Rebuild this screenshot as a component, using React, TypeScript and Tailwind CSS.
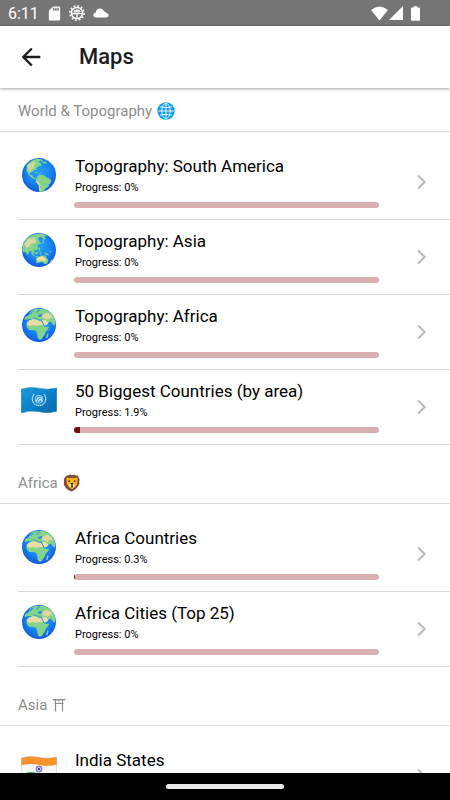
import type { ReactNode } from 'react';
import { MdArrowBack, MdSdCard } from 'react-icons/md';

type IconName = 'americas' | 'asia' | 'africa' | 'un' | 'india';

interface MapItem {
  title: string;
  progress: number;
  icon: IconName;
}

interface Section {
  title: string;
  emoji: ReactNode;
  items: MapItem[];
}

/* ---------- Section emojis ---------- */

function MeridianGlobe() {
  return (
    <svg viewBox="0 0 18 18" className="size-[18px]" fill="none" aria-hidden>
      <circle cx="9" cy="9" r="8.7" fill="#0f9bee" />
      <g stroke="#e6f5fe" strokeWidth="1">
        <ellipse cx="9" cy="9" rx="4.2" ry="7.6" />
        <path d="M9 1.200v15.600M1.200 9h15.600M3 4.900q6 1.600 12 0M3 13.100q6-1.600 12 0" />
      </g>
    </svg>
  );
}

function Lion() {
  return (
    <svg viewBox="0 0 18 18" className="size-[18px]" aria-hidden>
      <path
        d="M3.500 1.500 5.300 1.600 7 .6l2 .6 2-.6 1.800 1 2 0 1 2.100.9 2-.5 1.800.2 2.200-1.200 2.200-1.400 2-2 1.900-2 .9L9 17.600l-2.100-.9-2-.9-2-1.900-1.400-2L.8 9.700l.2-2.200L.7 5.700l1-2Z"
        fill="#7b4a3c"
      />
      <path
        d="M3.300 4.300Q4.700 3 5.800 4.200 9 3.200 12.200 4.200q1.200-1.200 2.500.1l-.3 3.300-.5 3.200-2.200 2.800L9 15.200l-2.700-1.600-2.200-2.800-.5-3.200Z"
        fill="#fcb316"
      />
      <path d="M7.500 9h3l1.500 2.600-1.600 2L9 14.400l-1.400-.8-1.600-2Z" fill="#fbe3a3" />
      <path d="M7.400 9h3.200L9.500 11l.7 2.400H7.800L8.500 11Z" fill="#38271f" />
      <circle cx="6.200" cy="7.200" r=".85" fill="#38271f" />
      <circle cx="11.800" cy="7.200" r=".85" fill="#38271f" />
    </svg>
  );
}

function Torii() {
  return (
    <svg viewBox="0 0 14 14" className="size-3.5" fill="none" stroke="#8e8e8e" aria-hidden>
      <path d="M.5 1.500h13M2.500 5.500h9" />
      <path d="M1 2.500h12" strokeOpacity=".4" />
      <path d="M3.500 2v11.500M10.500 2v11.500" strokeWidth="1.200" />
      <path d="M7 2v3.500" strokeOpacity=".7" />
    </svg>
  );
}

/* ---------- Row icons ---------- */

function Globe({ id, children }: { id: string; children: ReactNode }) {
  return (
    <svg viewBox="0 0 102 102" className="size-[34px]" aria-hidden>
      <defs>
        <radialGradient id={`${id}-sea`} cx=".5" cy=".42" r=".6">
          <stop offset="0" stopColor="#25a0f8" />
          <stop offset=".55" stopColor="#1688f3" />
          <stop offset="1" stopColor="#1356df" />
        </radialGradient>
        <clipPath id={`${id}-clip`}>
          <circle cx="51" cy="51" r="51" />
        </clipPath>
      </defs>
      <g clipPath={`url(#${id}-clip)`}>
        <rect width="102" height="102" fill={`url(#${id}-sea)`} />
        {children}
      </g>
    </svg>
  );
}

function AmericasGlobe({ id }: { id: string }) {
  return (
    <Globe id={id}>
      <path
        d="M15 21Q25 8 43 2l14 1-2 6-7 2 8 4 4 8-9 1-7 5-1 6-7 2-5 5-6 1-1 7 7 2 5 7 7 2-4 3-10-5-9-9-7-12Z"
        fill="#83d488"
      />
      <path d="M17 22 34 10l8 3-6 9 1 8-8 5-3 8-7-9-3-7Z" fill="#c9d99a" />
      <path d="m54 3 8 3-2 6 8-2 7 4-5 3-7-2-6-5Z" fill="#83d488" />
      <path d="m65 2 13 2 12 12-6 0-5-7-8-2Z" fill="#9adfb0" />
      <path d="m34 43 9-1 6 4 8 1-2 2-10-3Z" fill="#83d488" />
      <path
        d="m46 54 8-4 12 2 6 6 8 3 8 6-2 8-5 4-2 8-8 4-5 7-6 5-6 1-3-4 1-10-2-10-8-9 1-8Z"
        fill="#83d488"
      />
      <path d="m43 66 6 6 6 7-1 10 3 10-5-2-1-15-8-9Z" fill="#ead7a2" />
    </Globe>
  );
}

function AsiaGlobe({ id }: { id: string }) {
  return (
    <Globe id={id}>
      <path
        d="M2 38Q10 14 34 5L58 1l18 7-9 2 5 9-8 0-7-8-9 4 4 9 6 8-8 1-4 5 4 8-6 5-8 1 2 8-5 3-5-8-5 0-7 12-6-10-9-1Z"
        fill="#83d488"
      />
      <path d="m6 34 13-17 15-3 10 7-4 8-11 3-6 8-9 4Z" fill="#dfd7a2" />
      <path d="m62 17 5 8-5 7-4 1 4-7Z" fill="#83d488" />
      <path
        d="m51 42 4 6-1 7 5 5-5-1-4-9ZM26 55l9 8 4 6 11 1-2 3-12-3-9-9ZM40 58l8-3-1 9-7 1ZM52 60l6 1-3 6ZM65 59l11 2 6 6-10-1Z"
        fill="#78cf91"
      />
      <path
        d="m42 75 8-3 5-4 8-1 3 4 3-5 5 9 5 7-4 10-7 1-8-7-8 3-9 1Z"
        fill="#83d488"
      />
      <path d="m44 75 10-3 7-3 6 5 5 5-2 7-10-4-12 4Z" fill="#f0dda6" />
      <path d="m87 81 4 2-5 8-3 0ZM83 55l5 1-4 3Z" fill="#8fdc9b" />
    </Globe>
  );
}

function AfricaGlobe({ id }: { id: string }) {
  return (
    <Globe id={id}>
      <path
        d="M20 15 30 6 44 2l8 2 10-3 22 10 12 14 5 20-4 9-5-5-5-8-6 2-6 6-9 6-5-1-7-9-9-7-8-2-7-3-10 0-12 3 1-9 9-3 4-5 3-3-3-4Z"
        fill="#83d488"
      />
      <path d="m30 8 5 2-6 5-1 4-4-2 2-5ZM48 5l6 1-5 4-3 5-3-3Z" fill="#2a95ee" />
      <path d="m48 21 8-3 9 2 1 4-8 1-4 2-5-1Z" fill="#288eec" />
      <path d="m60 20 16-6 12 7 5 12-8-4-7 7-9-4-8-2Z" fill="#dfd89e" />
      <path
        d="m14 44 8-8 12-4 9 1 6 4 10 1 6 11 7 8 9-1-3 8-8 8-1 7-6 7-3 7-7 2-6-6-1-11-4-10-9-2-11 0-8-9Z"
        fill="#83d488"
      />
      <path d="m16 43 8-6 12-4 8 2 8 4 6 1 6 12-11-1-10 2-11-1-9 1-8-3Z" fill="#e9dca4" />
      <path d="m61 37 10-1 8 8-3 6-8 3-5-8Z" fill="#eee0a8" />
      <path d="m58 38 5 8 4 9 8-3 5-6" fill="none" stroke="#188bec" strokeWidth="2.500" />
      <path d="m33 29 7 3 5 0 5 4 10 0" fill="none" stroke="#188bec" strokeWidth="2.500" />
      <path d="m76 77 4 1-4 12-4 0Z" fill="#8fdc9b" />
    </Globe>
  );
}

const FLAG_OUTLINE = 'M.3 3.200Q8 .2 17.500 2.200T35.700 2v23.200q-8 2.600-17.500.6T.3 27Z';

function UnFlag() {
  return (
    <svg viewBox="0 0 36 28" className="h-7 w-9" fill="none" aria-hidden>
      <defs>
        <linearGradient id="un-blue" x1="0" y1="0" x2="1" y2="1">
          <stop offset="0" stopColor="#1e9bdf" />
          <stop offset=".55" stopColor="#087fc9" />
          <stop offset="1" stopColor="#0866a9" />
        </linearGradient>
      </defs>
      <path d={FLAG_OUTLINE} fill="url(#un-blue)" stroke="#1673ab" strokeWidth=".5" />
      <g stroke="#cfeaf8">
        <circle cx="18" cy="13.200" r="3.900" strokeWidth=".8" />
        <path
          d="m15.500 15.500 1-3 2-1.500M17.500 15.800l1-2.300 2 .3.500 2M19 11.200l1.800 1.300"
          strokeWidth="1.300"
        />
        <path
          d="M13 8.200q-3.500 5 .2 9.500 2 2 4.800 1.600 2.800.4 4.800-1.600 3.700-4.500.2-9.500"
          strokeWidth="1.200"
          strokeDasharray="1.600 .4"
        />
      </g>
    </svg>
  );
}

function IndiaFlag() {
  return (
    <svg viewBox="0 0 36 28" className="h-7 w-9" fill="none" aria-hidden>
      <defs>
        <clipPath id="india-clip">
          <path d={FLAG_OUTLINE} />
        </clipPath>
      </defs>
      <g clipPath="url(#india-clip)">
        <rect width="36" height="28" fill="#f7f7f7" />
        <path d="M0 0h36v9.500q-9 2.400-18 .4T0 10.500Z" fill="#f8922a" />
        <path d="M0 19q9-3 18-.8t18-.4V28H0Z" fill="#138a2e" />
      </g>
      <g stroke="#4a4bb0">
        <circle cx="18" cy="14" r="3" strokeWidth=".8" />
        <path
          d="M15 14h6M18 11v6M15.900 11.900l4.200 4.200M20.100 11.900l-4.200 4.200"
          strokeWidth=".5"
        />
      </g>
      <circle cx="18" cy="14" r="1.100" fill="#3436a5" />
      <path d={FLAG_OUTLINE} stroke="#8a8a8a" strokeOpacity=".4" strokeWidth=".6" />
    </svg>
  );
}

function RowIcon({ name, id }: { name: IconName; id: string }) {
  switch (name) {
    case 'americas':
      return <AmericasGlobe id={id} />;
    case 'asia':
      return <AsiaGlobe id={id} />;
    case 'africa':
      return <AfricaGlobe id={id} />;
    case 'un':
      return <UnFlag />;
    case 'india':
      return <IndiaFlag />;
  }
}

/* ---------- Data ---------- */

const SECTIONS: Section[] = [
  {
    title: 'World & Topography',
    emoji: <MeridianGlobe />,
    items: [
      { title: 'Topography: South America', progress: 0, icon: 'americas' },
      { title: 'Topography: Asia', progress: 0, icon: 'asia' },
      { title: 'Topography: Africa', progress: 0, icon: 'africa' },
      { title: '50 Biggest Countries (by area)', progress: 1.9, icon: 'un' },
    ],
  },
  {
    title: 'Africa',
    emoji: <Lion />,
    items: [
      { title: 'Africa Countries', progress: 0.3, icon: 'africa' },
      { title: 'Africa Cities (Top 25)', progress: 0, icon: 'africa' },
    ],
  },
  {
    title: 'Asia',
    emoji: <Torii />,
    items: [{ title: 'India States', progress: 0, icon: 'india' }],
  },
];

/* ---------- Layout ---------- */

function StatusBar() {
  return (
    <div className="flex h-[26px] shrink-0 items-center bg-[#757575] pl-2 pr-[30px] text-white">
      <span className="w-[38px] pt-0.5 text-base leading-6">6:11</span>
      <MdSdCard className="size-[17px] shrink-0" aria-hidden />
      {/* debug cog */}
      <svg viewBox="0 0 16 16" className="ml-1.5 size-4" fill="none" aria-hidden>
        <circle cx="8" cy="8" r="5.600" stroke="white" strokeWidth="1.500" />
        <circle cx="8" cy="8" r="7.100" stroke="white" strokeWidth="1.500" strokeDasharray="1.860 1.860" />
        <path d="M3 8.600h10M8 8.600v5" stroke="white" strokeWidth="1.300" />
        <path d="M4.500 7.500a3.500 3 0 0 1 7 0Z" fill="white" />
        <path d="M6.300 6.300h.8M8.900 6.300h.8" stroke="#757575" strokeWidth=".8" />
      </svg>
      <svg viewBox="0 0 16 10" className="ml-2 h-2.5 w-4" fill="white" aria-hidden>
        <path d="M3 9.500Q.3 9.300.3 7 .4 4.800 2.800 4.600 3.400.6 7 .5q2.800 0 4 3 1.500-.2 2.300 1.400 2.400.3 2.400 2.300-.1 2.100-2.400 2.300Z" />
      </svg>
      <span className="grow" />
      <svg viewBox="0 0 17 15" className="h-[15px] w-[17px]" fill="white" aria-hidden>
        <path d="M8.500 14.500 0 4Q8.500-3 17 4Z" />
      </svg>
      <svg viewBox="0 0 14 14" className="ml-px size-3.5" fill="white" aria-hidden>
        <path d="M14 0v14H0Z" />
      </svg>
      <svg viewBox="0 0 9 15" className="ml-2 h-[15px] w-[9px]" fill="white" aria-hidden>
        <path d="M2.700 1.500V.2h3.600v1.300H8q1 0 1 1v11.300q0 1-1 1H1q-1 0-1-1V2.500q0-1 1-1Z" />
      </svg>
    </div>
  );
}

function MapRow({ item, id }: { item: MapItem; id: string }) {
  return (
    <li className="ml-[18px] border-b border-[#d6d6d6]">
      <button type="button" className="flex w-full items-center text-left">
        <span className="mb-3.5 flex w-[57px] shrink-0 pl-[3px]">
          <span className="flex w-9 justify-center">
            <RowIcon name={item.icon} id={id} />
          </span>
        </span>
        <span className="block min-w-0 grow pb-[11px] pt-[9px]">
          <span className="block truncate text-[17px] leading-[25px] text-black">{item.title}</span>
          <span className="block text-[11px] leading-[18px] text-black">Progress: {item.progress}%</span>
          <span
            role="progressbar"
            aria-label={item.title}
            aria-valuenow={item.progress}
            className="-ml-px mt-[5px] block h-1.5 overflow-hidden rounded-full bg-[#d8b0b1]"
          >
            <span className="block h-full bg-[#7b0b0d]" style={{ width: `${item.progress}%` }} />
          </span>
        </span>
        <svg viewBox="0 0 10 16" className="ml-[38px] mr-[23px] h-4 w-2.5 shrink-0" fill="none" aria-hidden>
          <path d="m1 1.500 6.800 6.500L1 14.500" stroke="#b9b9b9" strokeWidth="1.900" />
        </svg>
      </button>
    </li>
  );
}

export default function App() {
  return (
    <div className="flex h-screen flex-col overflow-hidden bg-white font-[Roboto,sans-serif]">
      <StatusBar />

      <header className="z-10 flex h-[62px] shrink-0 items-center bg-white pl-[17px] shadow-[0_1px_3px_rgba(0,0,0,0.35)]">
        <button type="button" aria-label="Back" className="text-[#1c1c1e]">
          <MdArrowBack className="size-7" />
        </button>
        <h1 className="ml-[34px] text-[22px] font-medium leading-7 text-[#1c1c1e]">Maps</h1>
      </header>

      <main className="min-h-0 grow overflow-y-auto [scrollbar-width:none]">
        {SECTIONS.map((section, s) => (
          <section key={section.title}>
            <h2
              className={`flex items-center gap-[5px] border-b border-[#dedede] pb-2 pl-[18px] text-[15px] font-normal leading-6 text-[#8e8e8e] ${
                s === 0 ? 'pt-[11px]' : 'pt-[26px]'
              }`}
            >
              {section.title}
              {section.emoji}
            </h2>
            <ul className="pt-[13px]">
              {section.items.map((item, i) => (
                <MapRow key={item.title} item={item} id={`map-${s}-${i}`} />
              ))}
            </ul>
          </section>
        ))}
      </main>

      <footer className="flex h-[27px] shrink-0 items-center justify-center bg-black">
        <span className="h-[5px] w-[118px] rounded-full bg-[#ebebeb]" />
      </footer>
    </div>
  );
}
